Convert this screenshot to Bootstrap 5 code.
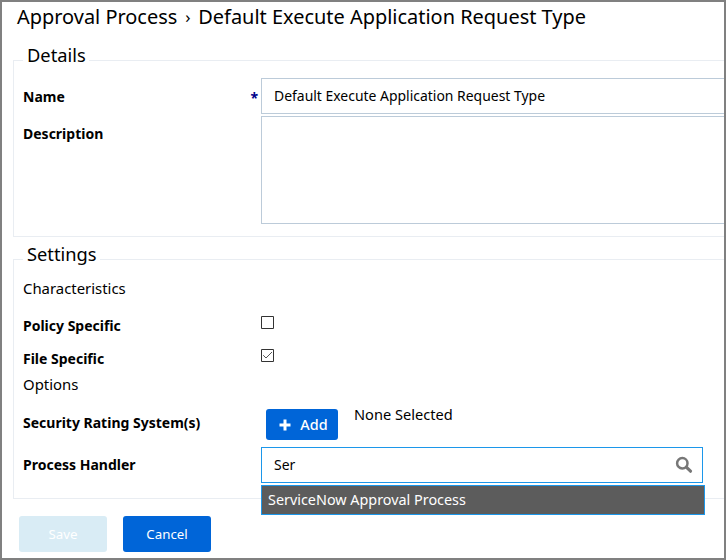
<!DOCTYPE html>
<html lang="en">
<head>
<meta charset="utf-8">
<meta name="viewport" content="width=device-width, initial-scale=1">
<title>Approval Process</title>
<link rel="stylesheet" href="https://cdn.jsdelivr.net/npm/bootstrap@5.3.0/dist/css/bootstrap.min.css">
<style>
body{font-family:"Noto Sans","Open Sans",sans-serif;font-size:14px;line-height:20px;color:#000}
.frame{height:560px;border:2px solid #808080}
.page-title{font-size:19.95px;line-height:29px;font-weight:400;padding-left:15px}
.sep{font-size:17px;width:21px;text-align:center}
.panel{margin-left:11px;margin-right:-10px;border:1px solid #e9edf2;padding:0 9px}
.panel legend{float:none;width:auto;font-size:18.3px;line-height:18px;height:28px;padding:0 3px 0 4px;margin:0}
.details{margin-top:15px;height:191px}
.details legend{line-height:17px}
.settings{margin-top:8px;height:254px}
.details .field{margin-right:-5px}
.cap{width:238px;font-weight:700;flex:none}
.name-label{padding-top:2px}
.req{color:#00008b;padding-right:3px;font-size:14px;line-height:20px;padding-top:1px}
.form-control.field{border:1px solid #bccbd9;border-radius:0;height:36px;padding:0 12px 1px;font-size:13.95px;color:#000;box-shadow:none}
.form-control.area{height:108px;resize:none}
.desc-row{margin-top:2px}
.sub{font-size:14.9px;line-height:30px;height:30px;margin-bottom:6px}
.opts{font-size:14.9px;line-height:18px;height:20px}
.check-row{height:33px}
.tick{width:13px;height:13px;margin-top:-6px;display:block}
.rating{padding:15px 0 6px}
.rating .cap{padding-top:3px}
.none{font-size:14.6px;margin:-6px 0 0 16px}
.btn.act{border:0;border-radius:3px;background:#0065d8;color:#fff;font-size:13.3px;line-height:20px;padding:0;width:88px;height:36px}
.btn.act.off{background:#d9ecf5;color:#fff;opacity:1}
.btn.act.add{width:72px;height:31px;margin:-1px 0 1px 5px;padding-left:3px;font-size:14.4px;font-weight:500;gap:9px}
.lookup{width:442px}
.form-control.query{border-color:#1c97ea}
.lookup svg{right:10px;top:9px}
.menu{top:38px;left:0;width:444px;height:30px;background:#5c5c5c;border:1px solid #1c97ea;color:#fff;padding:0 6px;line-height:28px;font-size:14.38px}
.actions{margin-top:17px;padding-left:17px}
</style>
<script src="https://cdn.jsdelivr.net/npm/bootstrap@5.3.0/dist/js/bootstrap.bundle.min.js"></script>
</head>
<body class="bg-white overflow-hidden">
<main class="frame overflow-hidden">
  <h1 class="page-title d-flex m-0"><span>Approval Process</span><span class="sep">›</span><span>Default Execute Application Request Type</span></h1>
  <form>
    <fieldset class="panel details">
      <legend>Details</legend>
      <div class="d-flex align-items-center mt-1">
        <label class="cap name-label d-flex justify-content-between" for="name"><span>Name</span><span class="req">*</span></label>
        <input id="name" class="form-control field" value="Default Execute Application Request Type">
      </div>
      <div class="desc-row d-flex">
        <label class="cap pt-2" for="desc">Description</label>
        <textarea id="desc" class="form-control field area"></textarea>
      </div>
    </fieldset>
    <fieldset class="panel settings">
      <legend>Settings</legend>
      <div class="sub">Characteristics</div>
      <div class="check-row d-flex align-items-center">
        <span class="cap">Policy Specific</span>
        <svg class="tick" viewBox="0 0 13 13"><path d="M.5.5h12v12H.5z" fill="#fff" stroke="#333"/></svg>
      </div>
      <div class="check-row d-flex align-items-center">
        <span class="cap">File Specific</span>
        <svg class="tick" viewBox="0 0 13 13"><path d="M.5.5h12v12H.5z" fill="#fff" stroke="#333"/><path d="M2.2 6.2 5 9l6-6" fill="none" stroke="#555"/></svg>
      </div>
      <div class="opts">Options</div>
      <div class="rating d-flex">
        <span class="cap">Security Rating System(s)</span>
        <button type="button" class="btn act add d-flex align-items-center justify-content-center flex-shrink-0"><svg width="12" height="12" viewBox="0 0 12 12"><path d="M6 .5v11M.5 6h11" stroke="#fff" stroke-width="3"/></svg>Add</button>
        <span class="none">None Selected</span>
      </div>
      <div class="d-flex align-items-center">
        <label class="cap" for="handler">Process Handler</label>
        <div class="lookup position-relative">
          <input id="handler" class="form-control field query" value="Ser" autocomplete="off">
          <svg class="position-absolute" width="18" height="18" viewBox="0 0 18 18" fill="none" stroke="#777"><circle cx="7.3" cy="7.2" r="5.2" stroke-width="2.5"/><path d="m11.3 11.2 4.2 4" stroke-width="3.2" stroke-linecap="round"/></svg>
          <div class="menu position-absolute">ServiceNow Approval Process</div>
        </div>
      </div>
    </fieldset>
    <div class="d-flex gap-3 actions">
      <button type="button" class="btn act off" disabled>Save</button>
      <button type="button" class="btn act">Cancel</button>
    </div>
  </form>
</main>
</body>
</html>
